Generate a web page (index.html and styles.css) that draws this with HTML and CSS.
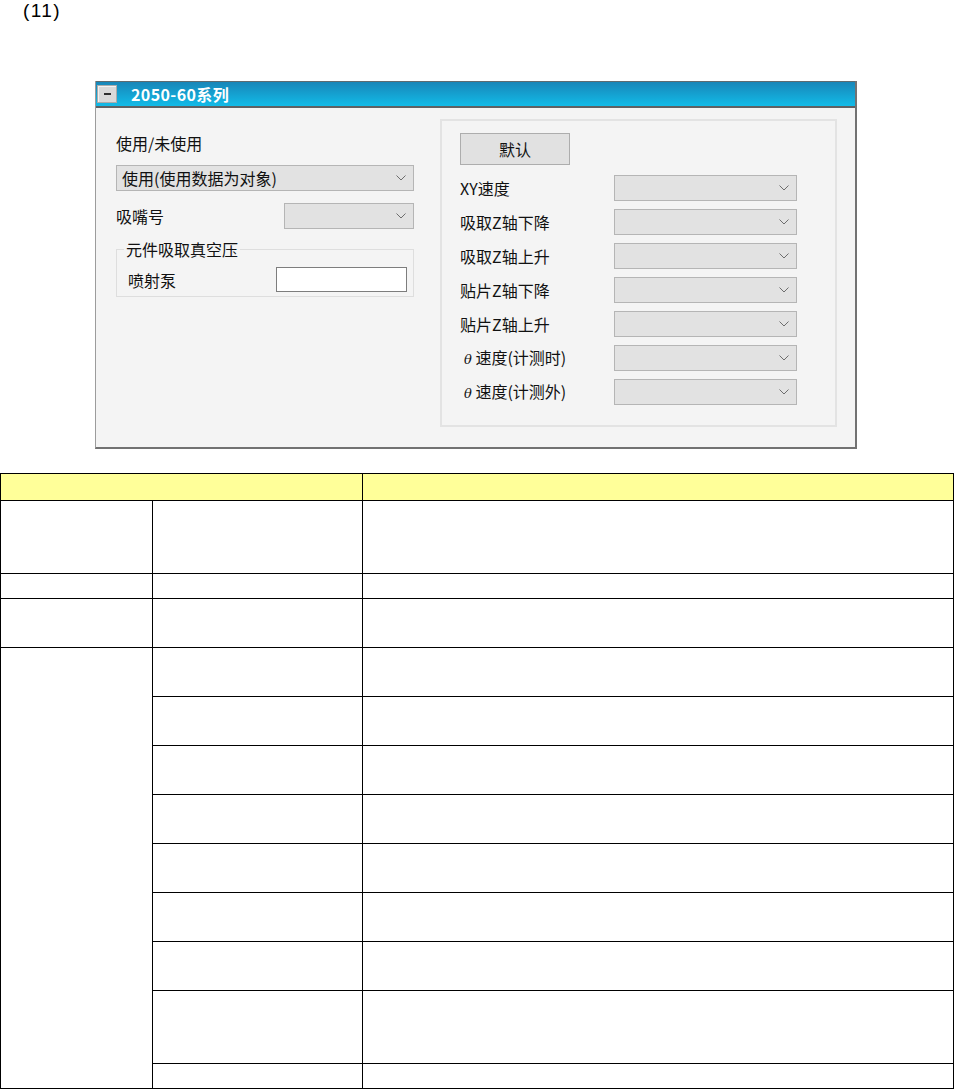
FILE: index.html
```html
<!DOCTYPE html>
<html lang="zh-CN">
<head>
<meta charset="utf-8">
<title>2050-60系列</title>
<link rel="stylesheet" href="styles.css">
</head>
<body>
<div class="page">
  <p class="num">(11)</p>

  <div class="window">
    <div class="titlebar">
      <span class="minbtn"><span class="dash"></span></span>
      <span class="title">2050-60系列</span>
    </div>
    <div class="wbody">
      <div class="left">
        <div class="label">使用/未使用</div>
        <div class="select wide">
          <span>使用(使用数据为对象)</span>
          <svg class="chev" width="10" height="6" viewBox="0 0 10 6"><path d="M0.5 0.5 L5 5 L9.5 0.5" fill="none" stroke="#6d6d6d" stroke-width="1"/></svg>
        </div>
        <div class="row2">
          <span class="label">吸嘴号</span>
          <div class="select nozzle">
            <span></span>
            <svg class="chev" width="10" height="6" viewBox="0 0 10 6"><path d="M0.5 0.5 L5 5 L9.5 0.5" fill="none" stroke="#6d6d6d" stroke-width="1"/></svg>
          </div>
        </div>
        <fieldset class="group">
          <legend>元件吸取真空压</legend>
          <div class="frow">
            <span>喷射泵</span>
            <div class="input"></div>
          </div>
        </fieldset>
      </div>

      <div class="right">
        <div class="btn">默认</div>
        <div class="rows">
          <div class="prow"><span class="plabel">XY速度</span><div class="select speed"><span></span><svg class="chev" width="10" height="6" viewBox="0 0 10 6"><path d="M0.5 0.5 L5 5 L9.5 0.5" fill="none" stroke="#6d6d6d" stroke-width="1"/></svg></div></div>
          <div class="prow"><span class="plabel">吸取Z轴下降</span><div class="select speed"><span></span><svg class="chev" width="10" height="6" viewBox="0 0 10 6"><path d="M0.5 0.5 L5 5 L9.5 0.5" fill="none" stroke="#6d6d6d" stroke-width="1"/></svg></div></div>
          <div class="prow"><span class="plabel">吸取Z轴上升</span><div class="select speed"><span></span><svg class="chev" width="10" height="6" viewBox="0 0 10 6"><path d="M0.5 0.5 L5 5 L9.5 0.5" fill="none" stroke="#6d6d6d" stroke-width="1"/></svg></div></div>
          <div class="prow"><span class="plabel">贴片Z轴下降</span><div class="select speed"><span></span><svg class="chev" width="10" height="6" viewBox="0 0 10 6"><path d="M0.5 0.5 L5 5 L9.5 0.5" fill="none" stroke="#6d6d6d" stroke-width="1"/></svg></div></div>
          <div class="prow"><span class="plabel">贴片Z轴上升</span><div class="select speed"><span></span><svg class="chev" width="10" height="6" viewBox="0 0 10 6"><path d="M0.5 0.5 L5 5 L9.5 0.5" fill="none" stroke="#6d6d6d" stroke-width="1"/></svg></div></div>
          <div class="prow"><span class="plabel indent"><span class="theta">θ</span> 速度(计测时)</span><div class="select speed"><span></span><svg class="chev" width="10" height="6" viewBox="0 0 10 6"><path d="M0.5 0.5 L5 5 L9.5 0.5" fill="none" stroke="#6d6d6d" stroke-width="1"/></svg></div></div>
          <div class="prow"><span class="plabel indent"><span class="theta">θ</span> 速度(计测外)</span><div class="select speed"><span></span><svg class="chev" width="10" height="6" viewBox="0 0 10 6"><path d="M0.5 0.5 L5 5 L9.5 0.5" fill="none" stroke="#6d6d6d" stroke-width="1"/></svg></div></div>
        </div>
      </div>
    </div>
  </div>

  <table class="spec">
    <colgroup>
      <col class="c1">
      <col class="c2">
      <col class="c3">
    </colgroup>
    <tr class="r-head"><th colspan="2"></th><th></th></tr>
    <tr class="r-tall"><td></td><td></td><td></td></tr>
    <tr class="r-short"><td></td><td></td><td></td></tr>
    <tr class="r-mid"><td></td><td></td><td></td></tr>
    <tr class="r-mid"><td rowspan="9"></td><td></td><td></td></tr>
    <tr class="r-mid"><td></td><td></td></tr>
    <tr class="r-mid"><td></td><td></td></tr>
    <tr class="r-mid"><td></td><td></td></tr>
    <tr class="r-mid"><td></td><td></td></tr>
    <tr class="r-mid"><td></td><td></td></tr>
    <tr class="r-mid"><td></td><td></td></tr>
    <tr class="r-tall"><td></td><td></td></tr>
    <tr class="r-short"><td></td><td></td></tr>
  </table>
</div>
</body>
</html>
```

FILE: styles.css
```css
* { box-sizing: border-box; }

html, body {
  margin: 0;
  padding: 0;
  background: #ffffff;
}

.page {
  width: 954px;
  font-family: "Noto Sans CJK SC", "Noto Sans", sans-serif;
  font-size: 16px;
  line-height: 22px;
  color: #111;
}

.num {
  margin: 0;
  padding-left: 23px;
  height: 22px;
  font-family: "Liberation Sans", Arial, sans-serif;
  font-size: 19px;
  line-height: 22px;
  letter-spacing: 1.4px;
  color: #000;
}

/* ---------- window ---------- */
.window {
  margin: 59px 0 0 95px;
  width: 762px;
  border-left: 1px solid #9c9c9c;
  border-right: 2px solid #727272;
  border-bottom: 2px solid #727272;
  background: #f4f4f4;
}

.titlebar {
  height: 27px;
  border-top: 1px solid #5f6b70;
  border-bottom: 2px solid #5e6164;
  background: linear-gradient(#1886b8, #12bbe8);
  display: flex;
  align-items: center;
  padding-left: 1px;
}

.minbtn {
  width: 20px;
  height: 18px;
  background: #d9d9d9;
  border: 1px solid #ababab;
  box-shadow: inset 1px 1px 0 #f2f2f2;
  display: flex;
  align-items: center;
  justify-content: center;
}

.dash {
  width: 7px;
  height: 2px;
  background: #2e2e2e;
}

.title {
  margin-left: 14px;
  color: #ffffff;
  font-weight: bold;
  font-size: 16px;
  letter-spacing: 0.4px;
}

.wbody {
  display: flex;
  gap: 26px;
  padding: 11px 18px 20px 20px;
}

/* ---------- left column ---------- */
.left {
  width: 298px;
  padding-top: 13px;
  display: flex;
  flex-direction: column;
}

.label {
  line-height: 22px;
}

.select {
  height: 26px;
  border: 1px solid #b5b5b5;
  background: #e2e2e2;
  display: flex;
  align-items: center;
  justify-content: space-between;
  padding: 0 7px 0 5px;
}

.select.wide {
  margin-top: 11px;
  width: 298px;
}

.chev { display: block; flex: none; }

.row2 {
  margin-top: 12px;
  height: 26px;
  display: flex;
  align-items: center;
  justify-content: space-between;
}

.select.nozzle {
  width: 130px;
}

.group {
  margin: 9px 0 0 0;
  width: 298px;
  border: 1px solid #dedede;
  padding: 7px 6px 4px 11px;
  min-inline-size: 0;
}

.group legend {
  padding: 0 2px;
  margin-left: -4px;
  line-height: 22px;
}

.frow {
  height: 25px;
  display: flex;
  align-items: center;
  justify-content: space-between;
}

.input {
  width: 131px;
  height: 25px;
  border: 1px solid #7d7d7d;
  background: #ffffff;
}

/* ---------- right group ---------- */
.right {
  width: 397px;
  height: 308px;
  border: 2px solid #e3e3e3;
  padding: 12px 38px 0 18px;
}

.btn {
  width: 110px;
  height: 32px;
  border: 1px solid #adadad;
  background: #e1e1e1;
  display: flex;
  align-items: center;
  justify-content: center;
}

.rows {
  margin-top: 10px;
  display: flex;
  flex-direction: column;
  gap: 8px;
}

.prow {
  height: 26px;
  display: flex;
  align-items: center;
}

.plabel {
  width: 154px;
  flex: none;
}

.plabel.indent {
  padding-left: 4px;
}

.theta {
  font-family: "DejaVu Serif", serif;
  font-style: italic;
  font-size: 13px;
}

.select.speed {
  width: 183px;
}

/* ---------- table ---------- */
.spec {
  margin-top: 24px;
  width: 953px;
  border-collapse: collapse;
  table-layout: fixed;
}

.spec .c1 { width: 152px; }
.spec .c2 { width: 210px; }
.spec .c3 { width: 591px; }

.spec th,
.spec td {
  border: 1px solid #000;
  padding: 0;
}

.spec th {
  background: #ffff99;
}

.r-head { height: 27px; }
.r-tall { height: 73px; }
.r-short { height: 25px; }
.r-mid { height: 49px; }
```
